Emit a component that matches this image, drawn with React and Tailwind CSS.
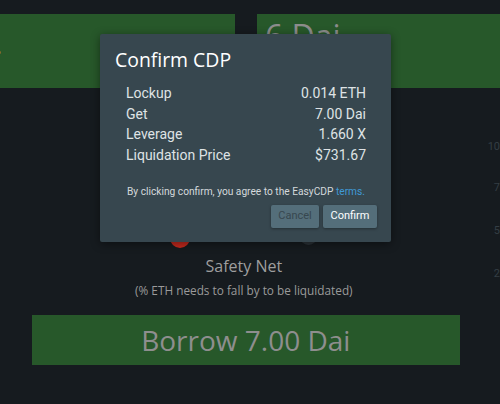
import React from "react";

const rows = [
  ["Lockup", "0.014 ETH"],
  ["Get", "7.00 Dai"],
  ["Leverage", "1.660 X"],
  ["Liquidation Price", "$731.67"],
];

function ConfirmModal() {
  return (
    <div className="absolute left-[100px] top-[34px] w-[291px] h-[208px] bg-[#37474f] rounded-[2px] shadow-[0_2px_10px_rgba(0,0,0,0.45)] flex flex-col pl-[15px] pr-[14px] pt-[12px] pb-[14px]">
      <div className="text-[19.4px] leading-[28px] text-white font-['Open_Sans',sans-serif]">
        Confirm CDP
      </div>
      <div className="mt-[9px] pl-[11px] pr-[11px] font-['Roboto',sans-serif] text-[14px] leading-[20.5px] text-[#dfe3e5]">
        {rows.map(([k, v]) => (
          <div key={k} className="flex justify-between">
            <span>{k}</span>
            <span>{v}</span>
          </div>
        ))}
      </div>
      <div className="mt-[20px] text-center font-['Roboto',sans-serif] text-[10.2px] leading-[14px] text-[#d4d9dc]">
        By clicking confirm, you agree to the EasyCDP{" "}
        <span className="text-[#3f9ad6]">terms.</span>
      </div>
      <div className="mt-auto flex justify-end gap-[4px] font-['Roboto',sans-serif] text-[11px]">
        <button className="w-[48px] h-[23px] bg-[#546e7a] text-[#37474f] rounded-[2px] shadow-[0_1px_3px_rgba(0,0,0,0.35)]">
          Cancel
        </button>
        <button className="w-[54px] h-[23px] bg-[#546e7a] text-white rounded-[2px] shadow-[0_1px_3px_rgba(0,0,0,0.35)]">
          Confirm
        </button>
      </div>
    </div>
  );
}

export default function App() {
  return (
    <div className="relative w-[500px] h-[404px] overflow-hidden bg-[#161b1f] font-['Open_Sans',sans-serif]">
      {/* top cards */}
      <div className="flex gap-[22px] pt-[14px]">
        <div className="w-[235px] h-[74px] bg-[#27582a] flex items-center">
          <span className="ml-[-2px] mt-[2px] w-[3px] h-[3px] rounded-full bg-[#8a6a2a]" />
        </div>
        <div className="flex-1 h-[74px] bg-[#27582a] px-[8px] pt-[2px]">
          <span className="text-[32px] leading-[40px] text-[#8c8c8c]">6 Dai</span>
        </div>
      </div>

      <div className="flex">
        {/* main column */}
        <div className="w-[488px] flex flex-col items-center">
          <div className="relative w-[420px] h-[24px] mt-[140px]">
            <span className="absolute left-[136px] top-0 w-[20px] h-[20px] rounded-full bg-[#c62a1f]" />
            <span className="absolute left-[266px] top-0 w-[17px] h-[17px] rounded-full bg-[#2b3338]" />
          </div>
          <div className="mt-[2px] text-[16px] leading-[24px] text-[#9e9e9e]">Safety Net</div>
          <div className="text-[11.8px] leading-[24px] text-[#9a9a9a]">
            (% ETH needs to fall by to be liquidated)
          </div>
          <div className="mt-[13px] ml-[4px] w-[428px] h-[50px] bg-[#27582a] flex items-center justify-center">
            <span className="text-[28px] leading-[36px] text-[#8e8e8e]">Borrow 7.00 Dai</span>
          </div>
        </div>

        {/* chart axis labels, cut by the window edge */}
        <div className="flex-1 flex flex-col items-end pt-[52px] font-['Roboto',sans-serif] text-[11px] leading-[14px] text-[#343e44] whitespace-nowrap">
          <span className="h-[41px]">10</span>
          <span className="h-[43px]">7</span>
          <span className="h-[43px]">5</span>
          <span>2</span>
        </div>
      </div>

      <ConfirmModal />
    </div>
  );
}
